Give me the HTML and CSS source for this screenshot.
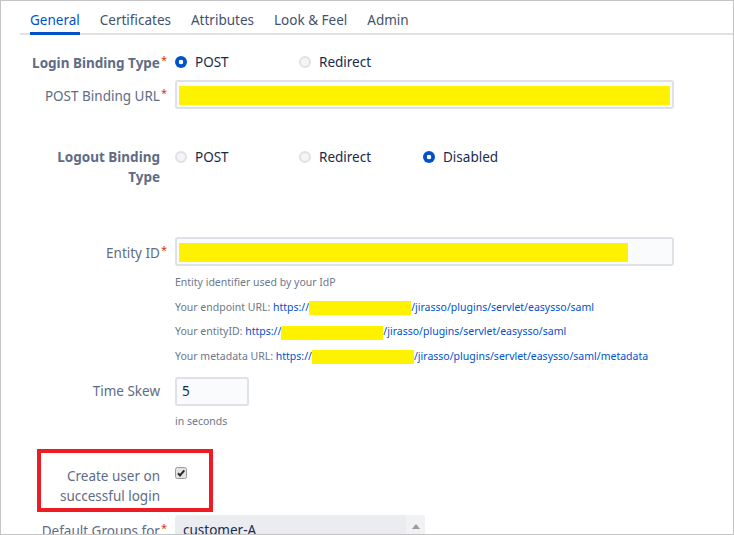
FILE: index.html
```html
<!DOCTYPE html>
<html lang="en">
<head>
<meta charset="utf-8">
<title>SAML settings</title>
<link rel="stylesheet" href="styles.css">
</head>
<body>
<div class="frame">
  <nav class="tabs">
    <a class="tab active">General</a>
    <a class="tab">Certificates</a>
    <a class="tab">Attributes</a>
    <a class="tab">Look &amp; Feel</a>
    <a class="tab">Admin</a>
  </nav>

  <div class="form">
    <div class="row row-login">
      <div class="label bold">Login Binding Type<span class="req">*</span></div>
      <div class="radios">
        <span class="opt"><span class="radio checked"></span>POST</span>
        <span class="opt"><span class="radio"></span>Redirect</span>
      </div>
    </div>

    <div class="row row-url">
      <div class="label">POST Binding URL<span class="req">*</span></div>
      <div class="input wide"><span class="redact full"></span></div>
    </div>

    <div class="row row-logout top">
      <div class="label bold">Logout Binding<br>Type</div>
      <div class="radios">
        <span class="opt"><span class="radio"></span>POST</span>
        <span class="opt"><span class="radio"></span>Redirect</span>
        <span class="opt"><span class="radio checked"></span>Disabled</span>
      </div>
    </div>

    <div class="row row-entity">
      <div class="label">Entity ID<span class="req">*</span></div>
      <div class="input wide"><span class="redact entity"></span></div>
    </div>
    <div class="row help-row">
      <div></div>
      <div class="help">
        <div>Entity identifier used by your IdP</div>
        <div>Your endpoint URL: <a class="link">https://<span class="redact-inline"></span>/jirasso/plugins/servlet/easysso/saml</a></div>
        <div>Your entityID: <a class="link">https://<span class="redact-inline"></span>/jirasso/plugins/servlet/easysso/saml</a></div>
        <div>Your metadata URL: <a class="link">https://<span class="redact-inline"></span>/jirasso/plugins/servlet/easysso/saml/metadata</a></div>
      </div>
    </div>

    <div class="row row-skew">
      <div class="label">Time Skew</div>
      <div class="input small">5</div>
    </div>
    <div class="row help-row help-seconds">
      <div></div>
      <div class="help"><div>in seconds</div></div>
    </div>

    <div class="row row-create top">
      <div class="label">Create user on<br>successful login</div>
      <div class="check-wrap">
        <svg class="checkbox" width="12" height="12" viewBox="0 0 12 12">
          <rect x="0.5" y="0.5" width="11" height="11" rx="2" fill="#e4e4e4" stroke="#9a9a9a"/>
          <path d="M3 6.3 L5 8.4 L9.3 3.4" fill="none" stroke="#2b2b2b" stroke-width="2"/>
        </svg>
      </div>
      <div class="highlight"></div>
    </div>

    <div class="row row-groups">
      <div class="label">Default Groups for<span class="req">*</span></div>
      <div class="select">
        <span class="select-value">customer-A</span>
        <span class="select-arrow">
          <svg width="8" height="5" viewBox="0 0 8 5"><path d="M0 5 L4 0 L8 5 Z" fill="#9a9a9a"/></svg>
        </span>
      </div>
    </div>
  </div>
</div>
</body>
</html>
```

FILE: styles.css
```css
html, body {
  margin: 0;
  padding: 0;
  background: #fff;
}

body {
  font-family: "Noto Sans", "Open Sans", sans-serif;
  font-size: 13.5px;
  color: #172b4d;
}

.frame {
  width: 734px;
  height: 535px;
  box-sizing: border-box;
  border: 1px solid #c4c4c4;
  overflow: hidden;
  background: #fff;
}

/* Tabs */
.tabs {
  display: flex;
  margin-left: 19px;
  padding-top: 10px;
  border-bottom: 2px solid #dfe1e6;
}

.tab {
  margin: 0 10px -2px;
  padding-bottom: 3px;
  line-height: 18px;
  border-bottom: 3px solid transparent;
  color: #42526e;
  white-space: nowrap;
}

.tab.active {
  color: #0052cc;
  border-bottom-color: #0052cc;
}

/* Form */
.form {
  display: flex;
  flex-direction: column;
}

.row {
  display: grid;
  grid-template-columns: 159px 1fr;
  column-gap: 15px;
  align-items: center;
}

.row.top {
  align-items: start;
}

.label {
  text-align: right;
  color: #5e6c84;
  line-height: 20px;
  white-space: nowrap;
}

.label.bold {
  font-weight: 700;
}

.req {
  color: #de350b;
  font-size: 11px;
  font-weight: 400;
  vertical-align: 4px;
  margin-left: 1px;
  margin-right: -7px;
}

.row-login { margin-top: 15px; }
.row-url { margin-top: 7px; }
.row-logout { margin-top: 38px; }
.row-entity { margin-top: 50px; }
.help-row { margin-top: 4px; }
.row-skew { margin-top: 8px; }
.help-seconds { margin-top: 3px; }
.row-create { margin-top: 32px; position: relative; }
.row-groups { margin-top: 9px; }

/* Radios */
.radios {
  display: flex;
  line-height: 20px;
}

.opt {
  display: flex;
  align-items: center;
  gap: 8px;
  width: 124px;
  color: #172b4d;
}

.radio {
  width: 12px;
  height: 12px;
  box-sizing: border-box;
  border-radius: 50%;
  border: 2px solid #dfe1e6;
  background: #f4f5f7;
  flex: none;
}

.radio.checked {
  border: none;
  background: radial-gradient(circle, #fff 0 2px, #0052cc 2.6px);
}

/* Inputs */
.input {
  box-sizing: border-box;
  height: 29px;
  border: 2px solid #dfe1e6;
  border-radius: 3px;
  background: #fafbfc;
  padding: 4px 2px 2px;
}

.input.wide {
  width: 499px;
}

.input.small {
  width: 74px;
  padding: 0 5px;
  line-height: 25px;
  color: #172b4d;
}

.redact {
  display: block;
  height: 19px;
  background: #fff200;
}

.redact.full { width: 491px; }
.redact.entity { width: 449px; }

.help {
  font-size: 10.5px;
  line-height: 24.7px;
  color: #6b778c;
  white-space: nowrap;
}

.link {
  color: #0052cc;
  text-decoration: none;
}

.redact-inline {
  display: inline-block;
  width: 102px;
  height: 14px;
  background: #fff200;
  vertical-align: middle;
}

/* Checkbox */
.check-wrap {
  padding-top: 1px;
  line-height: 0;
}

.checkbox {
  display: block;
}

.highlight {
  position: absolute;
  left: 36px;
  top: -17px;
  width: 176px;
  height: 63px;
  box-sizing: border-box;
  border: 4px solid #ed1c24;
  pointer-events: none;
}

/* Select */
.select {
  display: flex;
  width: 250px;
  height: 30px;
  border-radius: 3px;
  background: #ebecf0;
  overflow: hidden;
}

.select-value {
  flex: 1;
  padding-left: 8px;
  line-height: 30px;
  color: #172b4d;
}

.select-arrow {
  width: 19px;
  background: #f1f2f4;
  display: flex;
  justify-content: center;
  padding-top: 9px;
  box-sizing: border-box;
}

.select-arrow svg {
  display: block;
}
```
